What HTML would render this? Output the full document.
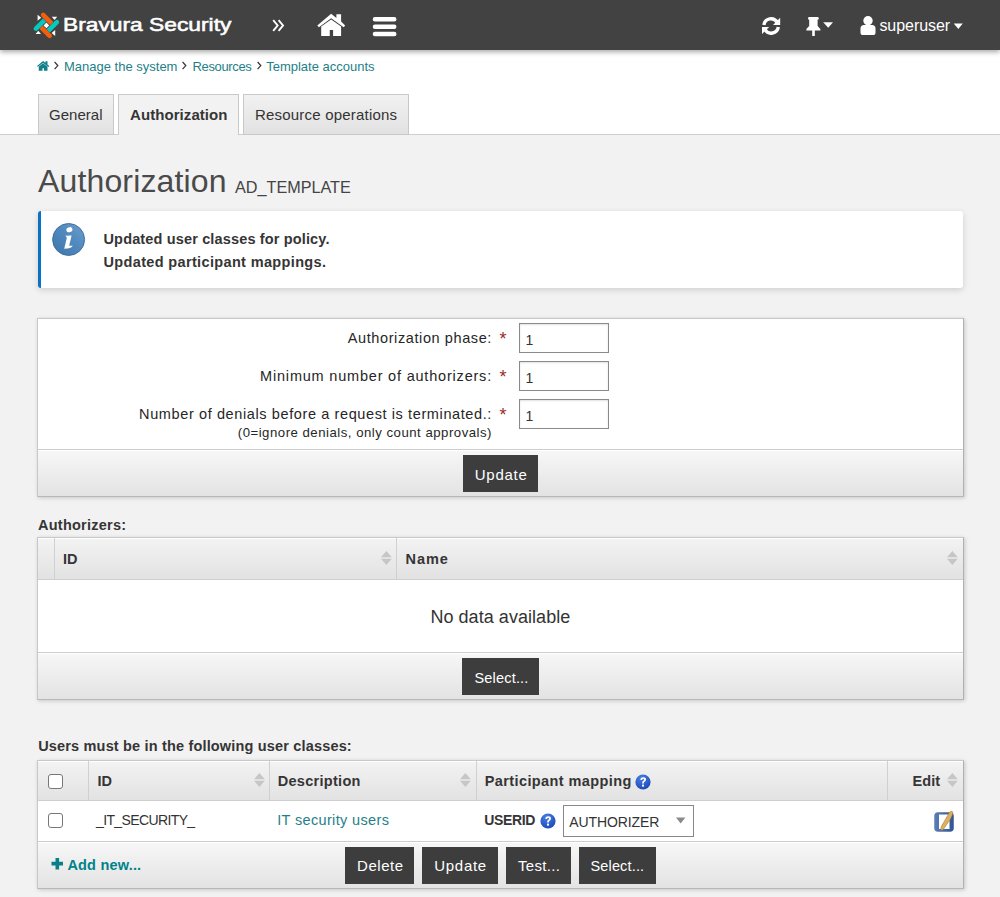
<!DOCTYPE html><html><head><meta charset="utf-8"><style>
html,body{margin:0;padding:0;}
body{width:1000px;height:897px;overflow:hidden;position:relative;background:#f2f2f2;font-family:"Liberation Sans",sans-serif;}
div{box-sizing:border-box;}
.btn{position:absolute;background:#3d3d3d;}
.ftr{background:linear-gradient(#f7f7f7,#e4e4e4);}
.th{background:linear-gradient(#f2f2f2,#e3e3e3);}
</style></head><body>
<div style="position:absolute;left:0px;top:50px;width:1000px;height:84px;background:#fff;"></div>
<div style="position:absolute;left:0px;top:134px;width:1000px;height:1px;background:#cfcfcf;"></div>
<div style="position:absolute;left:0px;top:0px;width:1000px;height:50px;background:#424242;box-shadow:0 2px 5px rgba(0,0,0,.35);z-index:5;"></div>
<div style="position:absolute;left:38px;top:94px;width:76px;height:41px;background:linear-gradient(#f1f1f1,#e2e2e2);border:1px solid #c9c9c9;"></div>
<div style="position:absolute;left:118px;top:94px;width:121px;height:41px;background:#f2f2f2;border:1px solid #c9c9c9;border-bottom:none;"></div>
<div style="position:absolute;left:243px;top:94px;width:166px;height:41px;background:linear-gradient(#f1f1f1,#e2e2e2);border:1px solid #c9c9c9;"></div>
<div style='position:absolute;top:107.30px;font-size:15px;line-height:15px;color:#333;font-weight:400;letter-spacing:0.02px;white-space:nowrap;left:49.00px;'>General</div>
<div style='position:absolute;top:107.30px;font-size:15px;line-height:15px;color:#353535;font-weight:700;letter-spacing:0.07px;white-space:nowrap;left:130.00px;'>Authorization</div>
<div style='position:absolute;top:107.30px;font-size:15px;line-height:15px;color:#333;font-weight:400;letter-spacing:0.2px;white-space:nowrap;left:255.00px;'>Resource operations</div>
<div style='position:absolute;top:59.60px;font-size:13px;line-height:13px;color:#237f87;font-weight:400;letter-spacing:0px;white-space:nowrap;left:64.00px;'>Manage the system</div>
<div style='position:absolute;top:59.60px;font-size:13px;line-height:13px;color:#237f87;font-weight:400;letter-spacing:-0.35px;white-space:nowrap;left:192.50px;'>Resources</div>
<div style='position:absolute;top:59.60px;font-size:13px;line-height:13px;color:#237f87;font-weight:400;letter-spacing:0px;white-space:nowrap;left:266.20px;'>Template accounts</div>
<div style='position:absolute;top:164.91px;font-size:32px;line-height:32px;color:#4a4a4a;font-weight:400;letter-spacing:0.15px;white-space:nowrap;left:38.00px;'>Authorization</div>
<div style='position:absolute;top:178.99px;font-size:16.2px;line-height:16.2px;color:#444;font-weight:400;letter-spacing:0px;white-space:nowrap;left:235.00px;'>AD_TEMPLATE</div>
<div style="position:absolute;left:38px;top:211px;width:925px;height:77px;background:#fff;border-left:3px solid #0a72c2;border-radius:3px;box-shadow:0 2px 6px rgba(0,0,0,.15);"></div>
<div style='position:absolute;top:232.03px;font-size:14.5px;line-height:14.5px;color:#353535;font-weight:700;letter-spacing:0.15px;white-space:nowrap;left:103.50px;'>Updated user classes for policy.</div>
<div style='position:absolute;top:255.23px;font-size:14.5px;line-height:14.5px;color:#353535;font-weight:700;letter-spacing:0.35px;white-space:nowrap;left:103.50px;'>Updated participant mappings.</div>
<div style="position:absolute;left:37px;top:318px;width:927px;height:179px;background:#fff;border:1px solid #c8c8c8;border-right-color:#b0b0b0;border-bottom-color:#b8b8b8;box-shadow:1px 1px 4px rgba(0,0,0,.18);"></div>
<div style="position:absolute;left:38px;top:449px;width:925px;height:47px;background:linear-gradient(#f7f7f7,#e3e3e3);border-top:1px solid #cdcdcd;box-shadow:inset 0 1px 0 #fff;"></div>
<div style='position:absolute;top:330.73px;font-size:14.5px;line-height:14.5px;color:#262626;font-weight:400;letter-spacing:0.6px;white-space:nowrap;right:508.00px;text-align:right;'>Authorization phase:</div>
<div style='position:absolute;top:368.73px;font-size:14.5px;line-height:14.5px;color:#262626;font-weight:400;letter-spacing:0.8px;white-space:nowrap;right:508.00px;text-align:right;'>Minimum number of authorizers:</div>
<div style='position:absolute;top:406.73px;font-size:14.5px;line-height:14.5px;color:#262626;font-weight:400;letter-spacing:0.61px;white-space:nowrap;right:508.00px;text-align:right;'>Number of denials before a request is terminated.:</div>
<div style='position:absolute;top:425.83px;font-size:13.2px;line-height:13.2px;color:#262626;font-weight:400;letter-spacing:0.5px;white-space:nowrap;right:508.00px;text-align:right;'>(0=ignore denials, only count approvals)</div>
<div style='position:absolute;top:329.76px;font-size:18px;line-height:18px;color:#9b2b2b;font-weight:400;letter-spacing:0px;white-space:nowrap;left:499.50px;'>*</div>
<div style="position:absolute;left:519px;top:323px;width:90px;height:30px;background:#fff;border:1px solid #8a8a8a;box-shadow:inset 0 1px 2px rgba(0,0,0,.12);"></div>
<div style='position:absolute;top:332.85px;font-size:14px;line-height:14px;color:#333;font-weight:400;letter-spacing:0px;white-space:nowrap;left:525.50px;'>1</div>
<div style='position:absolute;top:367.76px;font-size:18px;line-height:18px;color:#9b2b2b;font-weight:400;letter-spacing:0px;white-space:nowrap;left:499.50px;'>*</div>
<div style="position:absolute;left:519px;top:361px;width:90px;height:30px;background:#fff;border:1px solid #8a8a8a;box-shadow:inset 0 1px 2px rgba(0,0,0,.12);"></div>
<div style='position:absolute;top:370.85px;font-size:14px;line-height:14px;color:#333;font-weight:400;letter-spacing:0px;white-space:nowrap;left:525.50px;'>1</div>
<div style='position:absolute;top:405.76px;font-size:18px;line-height:18px;color:#9b2b2b;font-weight:400;letter-spacing:0px;white-space:nowrap;left:499.50px;'>*</div>
<div style="position:absolute;left:519px;top:399px;width:90px;height:30px;background:#fff;border:1px solid #8a8a8a;box-shadow:inset 0 1px 2px rgba(0,0,0,.12);"></div>
<div style='position:absolute;top:408.85px;font-size:14px;line-height:14px;color:#333;font-weight:400;letter-spacing:0px;white-space:nowrap;left:525.50px;'>1</div>
<div style="position:absolute;left:463px;top:455px;width:75px;height:37px;background:#3d3d3d;"></div>
<div style='position:absolute;top:467.30px;font-size:15px;line-height:15px;color:#fff;font-weight:400;letter-spacing:0.72px;white-space:nowrap;left:474.80px;'>Update</div>
<div style='position:absolute;top:517.53px;font-size:14.5px;line-height:14.5px;color:#353535;font-weight:700;letter-spacing:0.25px;white-space:nowrap;left:38.00px;'>Authorizers:</div>
<div style="position:absolute;left:37px;top:537px;width:927px;height:163px;background:#fff;border:1px solid #c8c8c8;border-right-color:#b0b0b0;border-bottom-color:#b8b8b8;box-shadow:1px 1px 4px rgba(0,0,0,.18);"></div>
<div style="position:absolute;left:38px;top:538px;width:925px;height:42px;background:linear-gradient(#f3f3f3,#e2e2e2);border-bottom:1px solid #cfcfcf;box-shadow:inset 0 1px 0 #fff;"></div>
<div style="position:absolute;left:54px;top:538px;width:1px;height:41px;background:#d0d0d0;"></div>
<div style="position:absolute;left:396px;top:538px;width:1px;height:41px;background:#d0d0d0;"></div>
<div style='position:absolute;top:551.73px;font-size:14.5px;line-height:14.5px;color:#353535;font-weight:700;letter-spacing:0px;white-space:nowrap;left:63.00px;'>ID</div>
<div style='position:absolute;top:551.73px;font-size:14.5px;line-height:14.5px;color:#353535;font-weight:700;letter-spacing:0.95px;white-space:nowrap;left:405.50px;'>Name</div>
<div style='position:absolute;top:607.66px;font-size:18px;line-height:18px;color:#333;font-weight:400;letter-spacing:0.05px;white-space:nowrap;left:430.40px;'>No data available</div>
<div style="position:absolute;left:38px;top:652px;width:925px;height:47px;background:linear-gradient(#f7f7f7,#e3e3e3);border-top:1px solid #cdcdcd;box-shadow:inset 0 1px 0 #fff;"></div>
<div style="position:absolute;left:462px;top:658px;width:77px;height:37px;background:#3d3d3d;"></div>
<div style='position:absolute;top:670.93px;font-size:14.5px;line-height:14.5px;color:#fff;font-weight:400;letter-spacing:0.2px;white-space:nowrap;left:474.40px;'>Select...</div>
<div style='position:absolute;top:738.53px;font-size:14.5px;line-height:14.5px;color:#353535;font-weight:700;letter-spacing:0.17px;white-space:nowrap;left:38.20px;'>Users must be in the following user classes:</div>
<div style="position:absolute;left:37px;top:760px;width:927px;height:129px;background:#fff;border:1px solid #c8c8c8;border-right-color:#b0b0b0;border-bottom-color:#b8b8b8;box-shadow:1px 1px 4px rgba(0,0,0,.18);"></div>
<div style="position:absolute;left:38px;top:761px;width:925px;height:40px;background:linear-gradient(#f3f3f3,#e2e2e2);border-bottom:1px solid #cfcfcf;box-shadow:inset 0 1px 0 #fff;"></div>
<div style="position:absolute;left:88px;top:761px;width:1px;height:40px;background:#d0d0d0;"></div>
<div style="position:absolute;left:269px;top:761px;width:1px;height:40px;background:#d0d0d0;"></div>
<div style="position:absolute;left:476px;top:761px;width:1px;height:40px;background:#d0d0d0;"></div>
<div style="position:absolute;left:887px;top:761px;width:1px;height:40px;background:#d0d0d0;"></div>
<div style='position:absolute;top:773.73px;font-size:14.5px;line-height:14.5px;color:#353535;font-weight:700;letter-spacing:0px;white-space:nowrap;left:97.40px;'>ID</div>
<div style='position:absolute;top:773.73px;font-size:14.5px;line-height:14.5px;color:#353535;font-weight:700;letter-spacing:0.3px;white-space:nowrap;left:277.70px;'>Description</div>
<div style='position:absolute;top:773.93px;font-size:14.5px;line-height:14.5px;color:#353535;font-weight:700;letter-spacing:0.4px;white-space:nowrap;left:484.70px;'>Participant mapping</div>
<div style='position:absolute;top:773.73px;font-size:14.5px;line-height:14.5px;color:#353535;font-weight:700;letter-spacing:0.1px;white-space:nowrap;left:912.50px;'>Edit</div>
<div style='position:absolute;top:813.15px;font-size:14px;line-height:14px;color:#333;font-weight:400;letter-spacing:-0.62px;white-space:nowrap;left:96.00px;'>_IT_SECURITY_</div>
<div style='position:absolute;top:812.73px;font-size:14.5px;line-height:14.5px;color:#1f8187;font-weight:400;letter-spacing:0.35px;white-space:nowrap;left:277.20px;'>IT security users</div>
<div style='position:absolute;top:812.95px;font-size:14px;line-height:14px;color:#353535;font-weight:700;letter-spacing:-0.35px;white-space:nowrap;left:484.20px;'>USERID</div>
<div style="position:absolute;left:563px;top:805px;width:131px;height:32px;background:#fff;border:1px solid #888;"></div>
<div style='position:absolute;top:815.15px;font-size:14px;line-height:14px;color:#333;font-weight:400;letter-spacing:-0.1px;white-space:nowrap;left:569.30px;'>AUTHORIZER</div>
<div style="position:absolute;left:48px;top:774px;width:15px;height:15px;background:#fff;border:1.5px solid #777;border-radius:3px;"></div>
<div style="position:absolute;left:48px;top:813px;width:15px;height:15px;background:#fff;border:1.5px solid #777;border-radius:3px;"></div>
<div style="position:absolute;left:38px;top:841px;width:925px;height:47px;background:linear-gradient(#f7f7f7,#e3e3e3);border-top:1px solid #cdcdcd;box-shadow:inset 0 1px 0 #fff;"></div>
<div style='position:absolute;top:857.73px;font-size:14.5px;line-height:14.5px;color:#00838a;font-weight:700;letter-spacing:0.2px;white-space:nowrap;left:67.40px;'>Add new...</div>
<div style="position:absolute;left:345px;top:847px;width:69px;height:37px;background:#3d3d3d;"></div>
<div style='position:absolute;top:858.20px;font-size:15px;line-height:15px;color:#fff;font-weight:400;letter-spacing:0.55px;white-space:nowrap;left:357.00px;'>Delete</div>
<div style="position:absolute;left:422px;top:847px;width:76px;height:37px;background:#3d3d3d;"></div>
<div style='position:absolute;top:858.20px;font-size:15px;line-height:15px;color:#fff;font-weight:400;letter-spacing:0.7px;white-space:nowrap;left:434.30px;'>Update</div>
<div style="position:absolute;left:506px;top:847px;width:65px;height:37px;background:#3d3d3d;"></div>
<div style='position:absolute;top:858.20px;font-size:15px;line-height:15px;color:#fff;font-weight:400;letter-spacing:0.3px;white-space:nowrap;left:518.00px;'>Test...</div>
<div style="position:absolute;left:579px;top:847px;width:77px;height:37px;background:#3d3d3d;"></div>
<div style='position:absolute;top:858.63px;font-size:14.5px;line-height:14.5px;color:#fff;font-weight:400;letter-spacing:0.15px;white-space:nowrap;left:590.50px;'>Select...</div>
<div style='position:absolute;top:16.06px;font-size:18.6px;line-height:18.6px;color:#fff;font-weight:400;letter-spacing:0px;white-space:nowrap;left:62.60px;z-index:6;transform:scaleX(1.225);transform-origin:0 0;-webkit-text-stroke:0.55px #fff;'>Bravura Security</div>
<div style='position:absolute;top:18.46px;font-size:16px;line-height:16px;color:#fff;font-weight:400;letter-spacing:-0.05px;white-space:nowrap;left:879.40px;z-index:6;'>superuser</div>
<svg style="position:absolute;left:34px;top:13px;z-index:6;overflow:visible" width="25" height="25" viewBox="0 0 25 25"><g transform="translate(12.4,12.4) rotate(45)"><path d="M2.5,-7.4 L-9.7,-7.4 A2.3,2.3 0 0 0 -9.7,-2.8 L2.5,-2.8 Z" fill="#f45f0e"/><path d="M-2.5,7.4 L9.7,7.4 A2.3,2.3 0 0 0 9.7,2.8 L-2.5,2.8 Z" fill="#f45f0e"/><path d="M-7.4,-2.5 L-7.4,9.7 A2.3,2.3 0 0 0 -2.8,9.7 L-2.8,-2.5 Z" fill="#06c8bc"/><path d="M7.4,2.5 L7.4,-9.7 A2.3,2.3 0 0 0 2.8,-9.7 L2.8,2.5 Z" fill="#06c8bc"/><rect x="-2" y="-2" width="4" height="4" fill="#fff"/></g><path d="M3.6,1.8 L3.6,7.8 L7.2,4.8 Z M17.8,3.8 L23.2,3.8 L20.5,7 Z M7,21 L1.6,21 L4.3,17.8 Z M21.2,23 L21.2,17 L17.6,20 Z" fill="#fff"/></svg>
<svg style="position:absolute;left:272px;top:19px;z-index:6;overflow:visible" width="13" height="13" viewBox="0 0 13 13"><path d="M1.2,1.2 L5.6,6.5 L1.2,11.8 M6.6,1.2 L11,6.5 L6.6,11.8" stroke="#fff" stroke-width="1.9" fill="none"/></svg>
<svg style="position:absolute;left:314px;top:10px;z-index:6;overflow:visible" width="35" height="30" viewBox="0 0 35 30"><path d="M3.3,15.4 L17.15,3.85 L22.4,7.9 L22.4,4.2 L27.1,4.2 L27.1,11.6 L31.15,15.4 L29.75,17.3 L17.15,8.2 L4.9,17.15 Z M7.2,16.6 L17.15,9.5 L27.1,16.6 L27.1,26.1 L19.1,26.1 L19.1,20.1 L15.75,20.1 L15.75,26.1 L7.2,26.1 Z" fill="#fff"/></svg>
<svg style="position:absolute;left:372px;top:16px;z-index:6;overflow:visible" width="25" height="22" viewBox="0 0 25 22"><rect x="0.8" y="1.1" width="23.6" height="4.5" rx="2" fill="#fff"/><rect x="0.8" y="8.5" width="23.6" height="4.5" rx="2" fill="#fff"/><rect x="0.8" y="15.8" width="23.6" height="4.5" rx="2" fill="#fff"/></svg>
<svg style="position:absolute;left:762px;top:17px;z-index:6;overflow:visible" width="19" height="19" viewBox="0 0 19 19"><path d="M1.9,7.9 A7.15,7.15 0 0 1 15.2,5.4" stroke="#fff" stroke-width="3.4" fill="none"/><path d="M18.2,0.8 L18.2,7.9 L11,7.9 Z" fill="#fff"/><g transform="rotate(180 9.1 8.95)"><path d="M1.9,7.9 A7.15,7.15 0 0 1 15.2,5.4" stroke="#fff" stroke-width="3.4" fill="none"/><path d="M18.2,0.8 L18.2,7.9 L11,7.9 Z" fill="#fff"/></g></svg>
<svg style="position:absolute;left:806px;top:16px;z-index:6;overflow:visible" width="28" height="21" viewBox="0 0 28 21"><rect x="2" y="1" width="10.8" height="2.8" rx="1.4" fill="#fff"/><rect x="3.2" y="2" width="8.4" height="9" fill="#fff"/><path d="M3.2,10 L11.6,10 L14.4,13 L14.4,14.6 L0.4,14.6 L0.4,13 Z" fill="#fff"/><rect x="6.2" y="14" width="2.6" height="6" fill="#fff"/><path d="M17.2,6.2 L27,6.2 L22.2,11.8 Z" fill="#fff"/></svg>
<svg style="position:absolute;left:860px;top:16px;z-index:6;overflow:visible" width="17" height="20" viewBox="0 0 17 20"><circle cx="8" cy="4.8" r="4.7" fill="#fff"/><path d="M0.5,12.5 Q0.5,9 4,9 L12,9 Q15.5,9 15.5,12.5 L15.5,17 Q15.5,19 13.5,19 L2.5,19 Q0.5,19 0.5,17 Z" fill="#fff"/></svg>
<svg style="position:absolute;left:953px;top:23px;z-index:6;overflow:visible" width="10" height="7" viewBox="0 0 10 7"><path d="M0.8,0.6 L9.8,0.6 L5.3,6 Z" fill="#fff"/></svg>
<svg style="position:absolute;left:37.3px;top:61.3px;z-index:1;overflow:visible" width="12.3" height="9.8" viewBox="3.3 3.85 27.85 22.25"><path d="M3.3,15.4 L17.15,3.85 L22.4,7.9 L22.4,4.2 L27.1,4.2 L27.1,11.6 L31.15,15.4 L29.75,17.3 L17.15,8.2 L4.9,17.15 Z M7.2,16.6 L17.15,9.5 L27.1,16.6 L27.1,26.1 L19.1,26.1 L19.1,20.1 L15.75,20.1 L15.75,26.1 L7.2,26.1 Z" fill="#11808a"/></svg>
<svg style="position:absolute;left:54.1px;top:61px;z-index:1;overflow:visible" width="6" height="9" viewBox="0 0 6 9"><path d="M0.6,1 L3.8,4.6 L0.6,8.2" stroke="#333" stroke-width="1.2" fill="none"/></svg>
<svg style="position:absolute;left:182.2px;top:61px;z-index:1;overflow:visible" width="6" height="9" viewBox="0 0 6 9"><path d="M0.6,1 L3.8,4.6 L0.6,8.2" stroke="#333" stroke-width="1.2" fill="none"/></svg>
<svg style="position:absolute;left:257.2px;top:61px;z-index:1;overflow:visible" width="6" height="9" viewBox="0 0 6 9"><path d="M0.6,1 L3.8,4.6 L0.6,8.2" stroke="#333" stroke-width="1.2" fill="none"/></svg>
<svg style="position:absolute;left:50px;top:221px;z-index:1;overflow:visible" width="37" height="37" viewBox="0 0 37 37"><defs><linearGradient id="ig" x1="0" y1="1" x2="1" y2="0"><stop offset="0" stop-color="#3e74a8"/><stop offset="0.5" stop-color="#4f88bd"/><stop offset="1" stop-color="#6b9dcc"/></linearGradient></defs><circle cx="18.6" cy="18.5" r="16" fill="url(#ig)" stroke="#3a6a98" stroke-width="0.9"/><ellipse cx="19.4" cy="8.7" rx="3.1" ry="2.4" transform="rotate(-20 19.4 8.7)" fill="#fff"/><path d="M15.2,14.8 L21.6,14.4 L19.2,24.6 Q20.5,24.9 22.8,24.8 Q21.5,27.6 14.2,27.7 L16.8,17 Q16.7,15.9 15.2,14.8 Z" fill="#fff"/></svg>
<svg style="position:absolute;left:381px;top:550.5px;z-index:1;overflow:visible" width="12" height="15" viewBox="0 0 12 15"><path d="M0,6.2 L5.4,0 L10.8,6.2 Z M0,7.8 L10.8,7.8 L5.4,14 Z" fill="#c6c6c6"/></svg>
<svg style="position:absolute;left:947px;top:550.5px;z-index:1;overflow:visible" width="12" height="15" viewBox="0 0 12 15"><path d="M0,6.2 L5.4,0 L10.8,6.2 Z M0,7.8 L10.8,7.8 L5.4,14 Z" fill="#c6c6c6"/></svg>
<svg style="position:absolute;left:253.6px;top:772.8px;z-index:1;overflow:visible" width="12" height="15" viewBox="0 0 12 15"><path d="M0,6.2 L5.4,0 L10.8,6.2 Z M0,7.8 L10.8,7.8 L5.4,14 Z" fill="#c6c6c6"/></svg>
<svg style="position:absolute;left:459.5px;top:772.8px;z-index:1;overflow:visible" width="12" height="15" viewBox="0 0 12 15"><path d="M0,6.2 L5.4,0 L10.8,6.2 Z M0,7.8 L10.8,7.8 L5.4,14 Z" fill="#c6c6c6"/></svg>
<svg style="position:absolute;left:947px;top:772.8px;z-index:1;overflow:visible" width="12" height="15" viewBox="0 0 12 15"><path d="M0,6.2 L5.4,0 L10.8,6.2 Z M0,7.8 L10.8,7.8 L5.4,14 Z" fill="#c6c6c6"/></svg>
<svg style="position:absolute;left:635.4px;top:774px;z-index:1;overflow:visible" width="16" height="16" viewBox="0 0 16 16"><defs><radialGradient id="hg" cx="0.4" cy="0.25" r="0.8"><stop offset="0" stop-color="#4a7fe0"/><stop offset="1" stop-color="#1a48b8"/></radialGradient></defs><circle cx="8" cy="8" r="7.6" fill="url(#hg)"/><path d="M5.4,6 Q5.4,3.2 8.2,3.2 Q11,3.2 11,5.6 Q11,7.2 9.3,8 Q8.9,8.3 8.9,9.4 L7.1,9.4 Q7,7.4 8.3,6.8 Q9.1,6.3 9.1,5.7 Q9.1,4.8 8.1,4.8 Q7.2,4.8 7.2,6 Z" fill="#fff"/><rect x="7" y="10.6" width="2" height="2" fill="#fff"/></svg>
<svg style="position:absolute;left:539.8px;top:813.1px;z-index:1;overflow:visible" width="16" height="16" viewBox="0 0 16 16"><defs><radialGradient id="hg" cx="0.4" cy="0.25" r="0.8"><stop offset="0" stop-color="#4a7fe0"/><stop offset="1" stop-color="#1a48b8"/></radialGradient></defs><circle cx="8" cy="8" r="7.6" fill="url(#hg)"/><path d="M5.4,6 Q5.4,3.2 8.2,3.2 Q11,3.2 11,5.6 Q11,7.2 9.3,8 Q8.9,8.3 8.9,9.4 L7.1,9.4 Q7,7.4 8.3,6.8 Q9.1,6.3 9.1,5.7 Q9.1,4.8 8.1,4.8 Q7.2,4.8 7.2,6 Z" fill="#fff"/><rect x="7" y="10.6" width="2" height="2" fill="#fff"/></svg>
<svg style="position:absolute;left:675px;top:816px;z-index:1;overflow:visible" width="11" height="9" viewBox="0 0 11 9"><path d="M1,1.4 L10.4,1.4 L5.7,7.6 Z" fill="#8a8a8a"/></svg>
<svg style="position:absolute;left:933px;top:810px;z-index:1;overflow:visible" width="22" height="23" viewBox="0 0 22 23"><defs><linearGradient id="eg" x1="0" x2="1"><stop offset="0" stop-color="#5a7fb5"/><stop offset="1" stop-color="#2f5592"/></linearGradient></defs><rect x="1.25" y="2.25" width="19.5" height="19.5" rx="3.8" fill="url(#eg)"/><rect x="6" y="4.5" width="10.5" height="14.5" fill="#fff"/><path d="M17.4,1.6 Q19.4,0.4 19.9,2.3 Q19.8,4.8 17.2,9.4 L10.4,19.3 Q9,20.8 7.9,20 Q7.3,18.7 8.6,16.1 L14.6,5.6 Q16.1,2.8 17.4,1.6 Z" fill="#dfb060" stroke="#9c7835" stroke-width="0.55"/></svg>
<svg style="position:absolute;left:51px;top:857px;z-index:1;overflow:visible" width="13" height="13" viewBox="0 0 13 13"><path d="M4.5,1 L8.1,1 L8.1,4.8 L12,4.8 L12,8.4 L8.1,8.4 L8.1,12.4 L4.5,12.4 L4.5,8.4 L0.5,8.4 L0.5,4.8 L4.5,4.8 Z" fill="#0b7f88"/></svg>
</body></html>
